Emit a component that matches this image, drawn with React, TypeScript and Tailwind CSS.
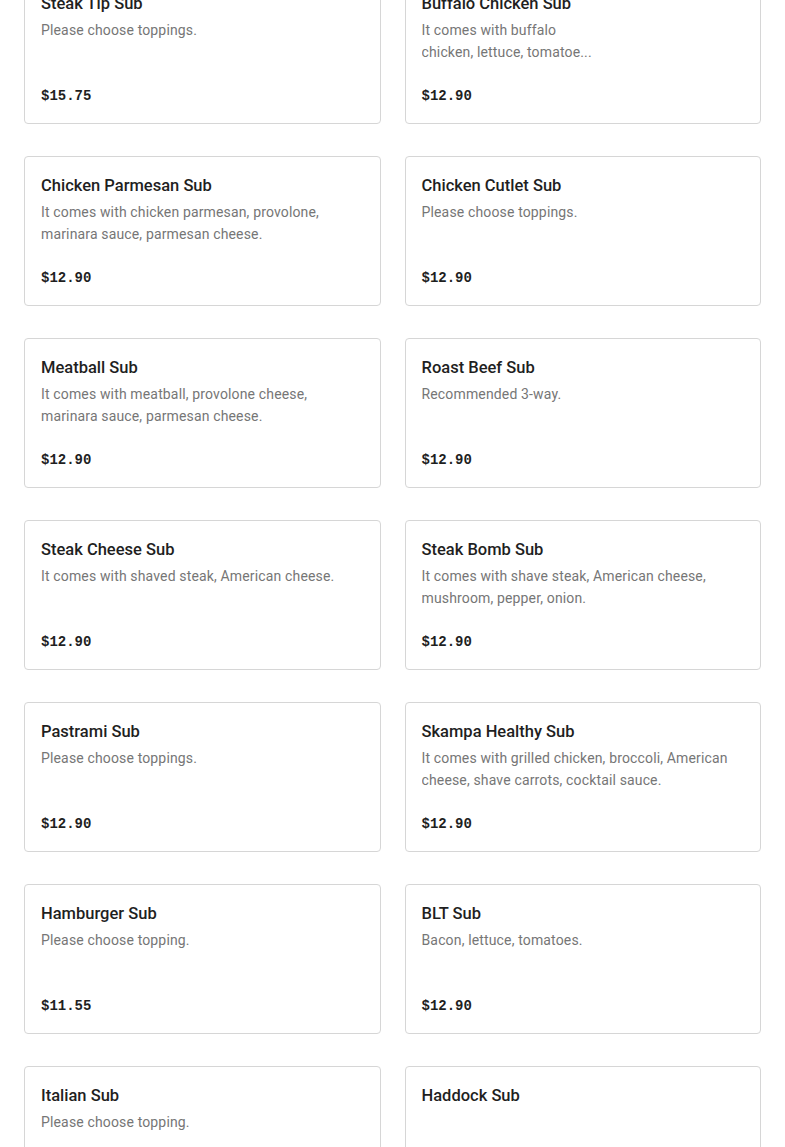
import React from 'react';

type Item = { name: string; desc?: React.ReactNode; price: string };

const items: Item[] = [
  { name: 'Steak Tip Sub', desc: 'Please choose toppings.', price: '$15.75' },
  {
    name: 'Buffalo Chicken Sub',
    desc: (
      <>
        It comes with buffalo
        <br />
        chicken, lettuce, tomatoe...
      </>
    ),
    price: '$12.90',
  },
  { name: 'Chicken Parmesan Sub', desc: 'It comes with chicken parmesan, provolone, marinara sauce, parmesan cheese.', price: '$12.90' },
  { name: 'Chicken Cutlet Sub', desc: 'Please choose toppings.', price: '$12.90' },
  { name: 'Meatball Sub', desc: 'It comes with meatball, provolone cheese, marinara sauce, parmesan cheese.', price: '$12.90' },
  { name: 'Roast Beef Sub', desc: 'Recommended 3-way.', price: '$12.90' },
  { name: 'Steak Cheese Sub', desc: 'It comes with shaved steak, American cheese.', price: '$12.90' },
  { name: 'Steak Bomb Sub', desc: 'It comes with shave steak, American cheese, mushroom, pepper, onion.', price: '$12.90' },
  { name: 'Pastrami Sub', desc: 'Please choose toppings.', price: '$12.90' },
  { name: 'Skampa Healthy Sub', desc: 'It comes with grilled chicken, broccoli, American cheese, shave carrots, cocktail sauce.', price: '$12.90' },
  { name: 'Hamburger Sub', desc: 'Please choose topping.', price: '$11.55' },
  { name: 'BLT Sub', desc: 'Bacon, lettuce, tomatoes.', price: '$12.90' },
  { name: 'Italian Sub', desc: 'Please choose topping.', price: '$12.90' },
  { name: 'Haddock Sub', price: '$12.90' },
];

const MenuCard: React.FC<{ item: Item }> = ({ item }) => (
  <div className="h-[150px] bg-white border border-[#d6d6d6] rounded-[4px] px-4 pt-4 pb-[17px] flex flex-col justify-between">
    <div>
      <h3 className="mt-px text-[16.5px] leading-6 font-medium text-[#1f1f1f] font-['Roboto',sans-serif]">
        {item.name}
      </h3>
      {item.desc && (
        <p className="mt-[3px] text-[14px] leading-[22px] text-[#767676] font-['Roboto',sans-serif] tracking-[0.15px] line-clamp-2">
          {item.desc}
        </p>
      )}
    </div>
    <div className="text-[14px] leading-5 font-bold text-[#1f1f1f] font-['Liberation_Mono',monospace]">{item.price}</div>
  </div>
);

export default function App() {
  return (
    <div className="min-h-screen bg-white overflow-hidden">
      <div className="-mt-[26px] px-6 grid grid-cols-2 gap-x-6 gap-y-8">
        {items.map((item) => (
          <MenuCard key={item.name} item={item} />
        ))}
      </div>
    </div>
  );
}
